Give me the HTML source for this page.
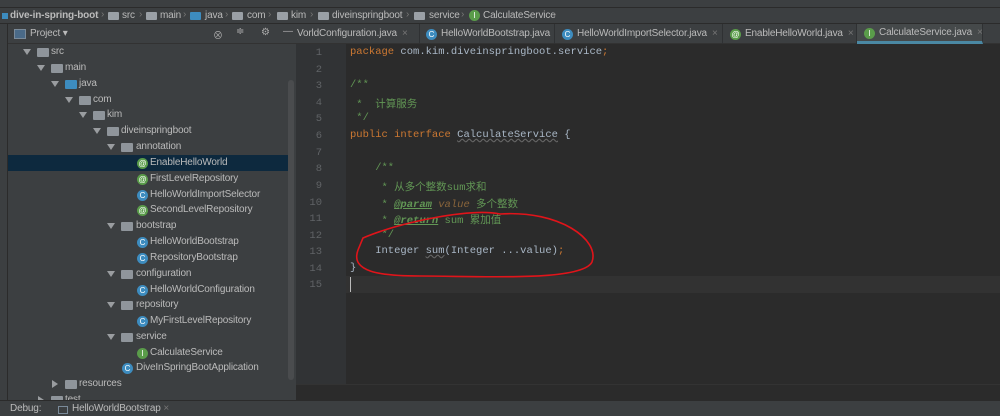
<!DOCTYPE html>
<html><head><meta charset="utf-8"><style>
*{margin:0;padding:0;box-sizing:border-box}
body{width:1000px;height:416px;overflow:hidden;background:#2b2b2b;font-family:"Liberation Sans","Noto Sans CJK SC",sans-serif;font-size:10px;letter-spacing:-0.15px;color:#bbbbbb;position:relative}
.abs{position:absolute}
.top{left:0;top:0;width:1000px;height:8px;background:#3c3f41;border-bottom:1px solid #2b2b2b}
.bc{left:0;top:8px;width:1000px;height:16px;background:#3c3f41;border-bottom:1px solid #2b2b2b;white-space:nowrap}
.bc span{position:absolute;top:2px;font-size:10px;color:#bbb}
.bc i.f{position:absolute;top:4px;width:11px;height:8px;background:#9aa0a6;border-radius:1px}
.bc b.s{position:absolute;top:1px;color:#777;font-weight:normal;font-size:10px}
.strip{left:0;top:24px;width:8px;height:376px;background:#3c3f41;border-right:1px solid #2b2b2b}
.proj{left:8px;top:24px;width:288px;height:376px;background:#3c3f41}
.ph{left:8px;top:24px;width:288px;height:20px;background:#3c3f41;border-bottom:1px solid #323232}
.row{position:absolute;height:16px;line-height:16px;font-size:10px;color:#bbb;white-space:nowrap}
.arr{position:absolute;top:5px;width:0;height:0;border-left:4px solid transparent;border-right:4px solid transparent;border-top:6px solid #9a9da0}
.arrr{position:absolute;top:4px;border-top:4px solid transparent;border-bottom:4px solid transparent;border-left:6px solid #9a9da0}
.fi{position:absolute;top:4px;width:12px;height:9px;background:#8f959b;border-radius:1px}
.ic{position:absolute;top:3px;width:11px;height:11px;border-radius:50%;font-size:8px;line-height:11px;text-align:center;color:#fff;font-style:normal;letter-spacing:0}
.g{background:#5a9c4a}.b{background:#3d8cbf}
.tabs{left:296px;top:24px;width:704px;height:20px;background:#3c3f41;border-bottom:1px solid #323232}
.tab{position:absolute;top:0;height:20px;line-height:20px;font-size:10px;color:#bbb;white-space:nowrap;border-right:1px solid #2f3133;overflow:hidden}
.x{color:#777;margin-left:5px}
.gut{left:296px;top:44px;width:50px;height:340px;background:#313335}
.ln{position:absolute;left:296px;width:26px;text-align:right;font-family:"Liberation Mono",monospace;font-size:10.5px;color:#606366;letter-spacing:0}
.code{position:absolute;left:350px;font-family:"Liberation Mono","Noto Sans CJK SC",monospace;font-size:10.5px;color:#a9b7c6;white-space:pre;letter-spacing:0}
.k{color:#cc7832}.c{color:#629755}.tg{color:#629755;font-style:italic;font-weight:bold;text-decoration:underline}.pv{color:#8a653b;font-style:italic}
.wv{text-decoration:underline wavy #666;}
.bot{left:0;top:400px;width:1000px;height:16px;background:#3c3f41;border-top:1px solid #2b2b2b}
</style></head><body>
<div class="abs top"></div>
<div class="abs bc">
<span style="left:2px;top:5px;width:6px;height:6px;background:#3d8cbf"></span>
<span style="left:10px;font-weight:bold">dive-in-spring-boot</span>
<b class="s" style="left:101px">›</b>
<i class="f" style="left:108px"></i><span style="left:122px">src</span>
<b class="s" style="left:139px">›</b>
<i class="f" style="left:146px"></i><span style="left:160px">main</span>
<b class="s" style="left:183px">›</b>
<i class="f" style="left:190px;background:#3d8cbf"></i><span style="left:205px">java</span>
<b class="s" style="left:225px">›</b>
<i class="f" style="left:232px"></i><span style="left:247px">com</span>
<b class="s" style="left:268px">›</b>
<i class="f" style="left:277px"></i><span style="left:291px">kim</span>
<b class="s" style="left:310px">›</b>
<i class="f" style="left:318px"></i><span style="left:332px">diveinspringboot</span>
<b class="s" style="left:406px">›</b>
<i class="f" style="left:414px"></i><span style="left:429px">service</span>
<b class="s" style="left:461px">›</b>
<i class="ic g" style="left:469px;top:2px">I</i><span style="left:483px">CalculateService</span>
<b class="s" style="left:553px">›</b>
</div>
<div class="abs strip"></div>
<div class="abs proj"></div>
<div class="abs ph">
<span class="abs" style="left:6px;top:5px;width:12px;height:10px;border:1px solid #7a8a99;background:#4a6a88"></span>
<span class="abs" style="left:22px;top:4px">Project ▾</span>
<span class="abs" style="left:205px;top:3px;color:#aaa">⊗</span>
<span class="abs" style="left:228px;top:2px;color:#aaa">≑</span>
<span class="abs" style="left:253px;top:3px;color:#aaa">⚙</span>
<span class="abs" style="left:275px;top:2px;color:#aaa">—</span>
</div>
<div class="abs" style="left:288px;top:80px;width:6px;height:300px;background:#4a4c4e;border-radius:3px"></div>
<div class="abs" style="left:8px;top:155px;width:280px;height:16px;background:#0d293e"></div>

<div class="row" style="top:44px;left:0"><i class="arr" style="left:23px"></i><i class="fi" style="left:37px"></i><span style="position:absolute;left:51px">src</span></div>
<div class="row" style="top:60px;left:0"><i class="arr" style="left:37px"></i><i class="fi" style="left:51px"></i><span style="position:absolute;left:65px">main</span></div>
<div class="row" style="top:76px;left:0"><i class="arr" style="left:51px"></i><i class="fi" style="left:65px;background:#3d8cbf"></i><span style="position:absolute;left:79px">java</span></div>
<div class="row" style="top:92px;left:0"><i class="arr" style="left:65px"></i><i class="fi" style="left:79px"></i><span style="position:absolute;left:93px">com</span></div>
<div class="row" style="top:107px;left:0"><i class="arr" style="left:79px"></i><i class="fi" style="left:93px"></i><span style="position:absolute;left:107px">kim</span></div>
<div class="row" style="top:123px;left:0"><i class="arr" style="left:93px"></i><i class="fi" style="left:107px"></i><span style="position:absolute;left:121px">diveinspringboot</span></div>
<div class="row" style="top:139px;left:0"><i class="arr" style="left:107px"></i><i class="fi" style="left:121px"></i><span style="position:absolute;left:136px">annotation</span></div>
<div class="row" style="top:155px;left:0"><i class="ic g" style="left:137px">@</i><span style="position:absolute;left:150px">EnableHelloWorld</span></div>
<div class="row" style="top:171px;left:0"><i class="ic g" style="left:137px">@</i><span style="position:absolute;left:150px">FirstLevelRepository</span></div>
<div class="row" style="top:187px;left:0"><i class="ic b" style="left:137px">C</i><span style="position:absolute;left:150px">HelloWorldImportSelector</span></div>
<div class="row" style="top:202px;left:0"><i class="ic g" style="left:137px">@</i><span style="position:absolute;left:150px">SecondLevelRepository</span></div>
<div class="row" style="top:218px;left:0"><i class="arr" style="left:107px"></i><i class="fi" style="left:121px"></i><span style="position:absolute;left:136px">bootstrap</span></div>
<div class="row" style="top:234px;left:0"><i class="ic b" style="left:137px">C</i><span style="position:absolute;left:150px">HelloWorldBootstrap</span></div>
<div class="row" style="top:250px;left:0"><i class="ic b" style="left:137px">C</i><span style="position:absolute;left:150px">RepositoryBootstrap</span></div>
<div class="row" style="top:266px;left:0"><i class="arr" style="left:107px"></i><i class="fi" style="left:121px"></i><span style="position:absolute;left:136px">configuration</span></div>
<div class="row" style="top:282px;left:0"><i class="ic b" style="left:137px">C</i><span style="position:absolute;left:150px">HelloWorldConfiguration</span></div>
<div class="row" style="top:297px;left:0"><i class="arr" style="left:107px"></i><i class="fi" style="left:121px"></i><span style="position:absolute;left:136px">repository</span></div>
<div class="row" style="top:313px;left:0"><i class="ic b" style="left:137px">C</i><span style="position:absolute;left:150px">MyFirstLevelRepository</span></div>
<div class="row" style="top:329px;left:0"><i class="arr" style="left:107px"></i><i class="fi" style="left:121px"></i><span style="position:absolute;left:136px">service</span></div>
<div class="row" style="top:345px;left:0"><i class="ic g" style="left:137px">I</i><span style="position:absolute;left:150px">CalculateService</span></div>
<div class="row" style="top:360px;left:0"><i class="ic b" style="left:122px">C</i><span style="position:absolute;left:136px">DiveInSpringBootApplication</span></div>
<div class="row" style="top:376px;left:0"><i class="arrr" style="left:52px"></i><i class="fi" style="left:65px"></i><span style="position:absolute;left:79px">resources</span></div>
<div class="row" style="top:392px;left:0"><i class="arrr" style="left:38px"></i><i class="fi" style="left:51px"></i><span style="position:absolute;left:65px">test</span></div>

<div class="abs tabs">
<div class="tab" style="left:0;width:124px;padding-left:1px">VorldConfiguration.java<span class="x">×</span></div>
<div class="tab" style="left:124px;width:135px;padding-left:6px"><i class="ic b" style="position:relative;display:inline-block;top:1px;margin-right:4px">C</i>HelloWorldBootstrap.java<span class="x">×</span></div>
<div class="tab" style="left:259px;width:168px;padding-left:7px"><i class="ic b" style="position:relative;display:inline-block;top:1px;margin-right:4px">C</i>HelloWorldImportSelector.java<span class="x">×</span></div>
<div class="tab" style="left:427px;width:134px;padding-left:7px"><i class="ic g" style="position:relative;display:inline-block;top:1px;margin-right:4px">@</i>EnableHelloWorld.java<span class="x">×</span></div>
<div class="tab" style="left:561px;width:126px;padding-left:7px;background:#45494a;border-bottom:3px solid #4a88a3;line-height:18px"><i class="ic g" style="position:relative;display:inline-block;top:1px;margin-right:4px">I</i>CalculateService.java<span class="x">×</span></div>
</div>

<div class="abs gut"></div>
<div class="abs" style="left:346px;top:276px;width:654px;height:17px;background:#323232"></div>
<div class="abs" style="left:350px;top:277px;width:1px;height:15px;background:#bbb"></div>
<div class="abs" style="left:296px;top:384px;width:704px;height:16px;background:#2b2b2b;border-top:1px solid #333"></div>

<div class="ln" style="top:47px">1</div><div class="ln" style="top:64px">2</div><div class="ln" style="top:80px">3</div><div class="ln" style="top:97px">4</div><div class="ln" style="top:113px">5</div><div class="ln" style="top:130px">6</div><div class="ln" style="top:147px">7</div><div class="ln" style="top:163px">8</div><div class="ln" style="top:180px">9</div><div class="ln" style="top:197px">10</div><div class="ln" style="top:213px">11</div><div class="ln" style="top:230px">12</div><div class="ln" style="top:246px">13</div><div class="ln" style="top:263px">14</div><div class="ln" style="top:279px">15</div>

<div class="code" style="top:46px"><span class="k">package</span> com.kim.diveinspringboot.service<span class="k">;</span></div>
<div class="code" style="top:79px"><span class="c">/**</span></div>
<div class="code" style="top:96px"><span class="c"> *  计算服务</span></div>
<div class="code" style="top:112px"><span class="c"> */</span></div>
<div class="code" style="top:129px"><span class="k">public interface</span> <span class="wv">CalculateService</span> {</div>
<div class="code" style="top:162px"><span class="c">    /**</span></div>
<div class="code" style="top:179px"><span class="c">     * 从多个整数sum求和</span></div>
<div class="code" style="top:196px"><span class="c">     * </span><span class="tg">@param</span> <span class="pv">value</span><span class="c"> 多个整数</span></div>
<div class="code" style="top:212px"><span class="c">     * </span><span class="tg">@return</span><span class="c"> sum 累加值</span></div>
<div class="code" style="top:229px"><span class="c">     */</span></div>
<div class="code" style="top:245px">    Integer <span class="wv">sum</span>(Integer ...value)<span class="k">;</span></div>
<div class="code" style="top:262px">}</div>

<svg class="abs" style="left:0;top:0" width="1000" height="416">
<path d="M363 238 C 400 222, 470 208, 500 214 C 560 210, 600 240, 592 262 C 582 282, 480 276, 420 276 C 380 276, 350 272, 358 250 Z" fill="none" stroke="#e0141a" stroke-width="1.6"/>
</svg>

<div class="abs bot">
<span class="abs" style="left:10px;top:2px">Debug:</span>
<span class="abs" style="left:58px;top:5px;width:10px;height:8px;border:1px solid #7a8a99"></span>
<span class="abs" style="left:72px;top:2px">HelloWorldBootstrap <span style="color:#777">×</span></span>
</div>
</body></html>
